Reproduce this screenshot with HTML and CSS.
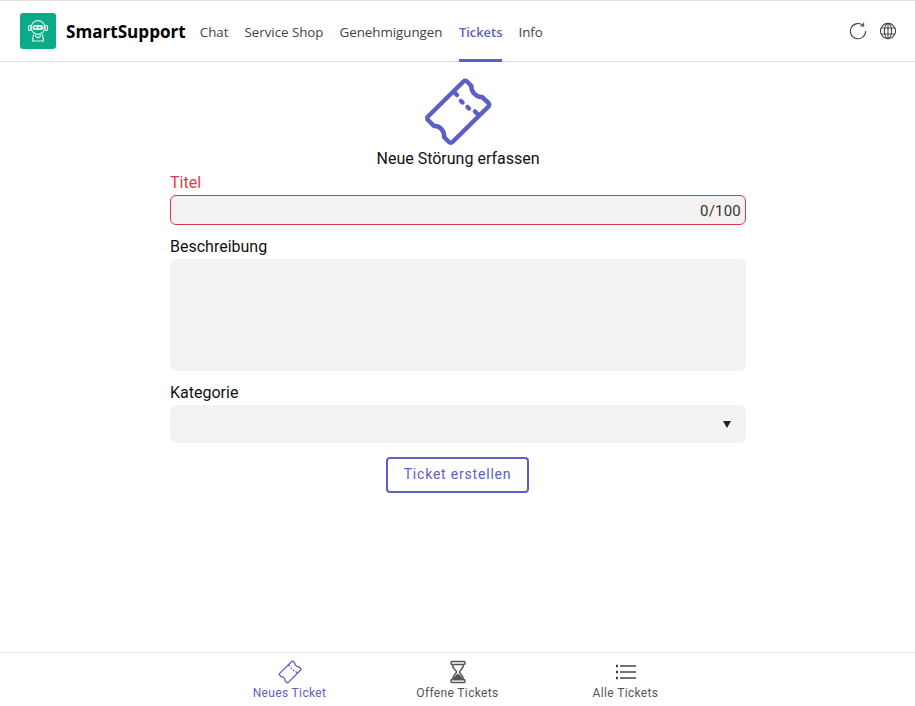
FILE: index.html
```html
<!DOCTYPE html>
<html lang="de">

<head>
    <meta charset="UTF-8">
    <meta name="viewport" content="width=device-width, initial-scale=1.0">
    <title>SmartSupport</title>
    <link rel="stylesheet" href="styles.css">
</head>

<body>
    <header class="topbar">
        <div class="logo">
            <svg width="22" height="24" viewBox="0 0 22 24" fill="none" stroke="#d9f3ec" stroke-width="1.200">
                <circle cx="11" cy="8.500" r="6.800" />
                <rect x="5.500" y="6" width="11" height="5" rx="2.500" fill="#d9f3ec" stroke="none" />
                <circle cx="8.500" cy="8.500" r="1" fill="#0bab87" stroke="none" />
                <path d="M11.500 8.500h2" stroke="#0bab87" />
                <rect x="1.500" y="6.500" width="2.500" height="5" rx="1" />
                <rect x="18" y="6.500" width="2.500" height="5" rx="1" />
                <path d="M6.500 15.500l-1 6.500h11l-1-6.500" />
                <path d="M8 16.500l3 2.500 3-2.500" />
            </svg>
        </div>
        <span class="brand">SmartSupport</span>
        <nav class="tabs">
            <a class="tab" href="#">Chat</a>
            <a class="tab" href="#">Service Shop</a>
            <a class="tab" href="#">Genehmigungen</a>
            <a class="tab active" href="#">Tickets</a>
            <a class="tab" href="#">Info</a>
        </nav>
        <div class="actions">
            <svg width="18" height="18" viewBox="0 0 18 18" fill="none" stroke="#444" stroke-width="1.100">
                <path d="M14.300 3.700A7.600 7.600 0 1 0 16.600 9" />
                <path d="M14.600 0.800v3.200h-3.200" />
            </svg>
            <svg width="18" height="18" viewBox="0 0 18 18" fill="none" stroke="#444" stroke-width="1.100">
                <circle cx="9" cy="9" r="7.600" />
                <ellipse cx="9" cy="9" rx="3.600" ry="7.600" />
                <path d="M9 1.400v15.200M2.200 6h13.600M2.200 12h13.600" />
            </svg>
        </div>
    </header>

    <main class="content">
        <svg class="hero" width="68" height="68" viewBox="0 0 68 68" fill="none" stroke="#5b5fc7" stroke-width="4.500" stroke-linejoin="round" stroke-linecap="round">
            <path d="M39.500 3.500c1-1 2.500-1 3.500 0l4.500 4.500c-1 5 4.500 11.500 10.500 11l6.500 6c1 1 1 2.500 0 3.500L28.500 64c-1 1-2.500 1-3.500 0l-5-5c1-5-4-12-10-11l-6-6c-1-1-1-2.500 0-3.500z" />
            <path d="M30.500 14.500l2.500 2.500M37 23l1.500 1.500M43.500 29l1.500 1.500M51 33.500l3 3" />
        </svg>
        <h1 class="title">Neue Störung erfassen</h1>

        <form class="ticket-form">
            <label class="field-label error" for="titel">Titel</label>
            <div class="input-wrap">
                <input class="input error" id="titel" type="text">
                <span class="counter">0/100</span>
            </div>

            <label class="field-label" for="beschreibung">Beschreibung</label>
            <textarea class="input area" id="beschreibung"></textarea>

            <label class="field-label" for="kategorie">Kategorie</label>
            <div class="select" id="kategorie"><span class="caret"></span></div>

            <button class="submit" type="button">Ticket erstellen</button>
        </form>
    </main>

    <footer class="bottombar">
        <a class="bottom-item active" href="#">
            <svg width="24" height="24" viewBox="0 0 68 68" fill="none" stroke="#5b5fc7" stroke-width="3.600" stroke-linejoin="round" stroke-linecap="round">
                <path d="M39.500 3.500c1-1 2.500-1 3.500 0l4.500 4.500c-1 5 4.500 11.500 10.500 11l6.500 6c1 1 1 2.500 0 3.500L28.500 64c-1 1-2.500 1-3.500 0l-5-5c1-5-4-12-10-11l-6-6c-1-1-1-2.500 0-3.500z" />
                <path d="M30.500 14.500l2.500 2.500M37 23l1.500 1.500M43.500 29l1.500 1.500M51 33.500l3 3" />
            </svg>
            <span class="bottom-label">Neues Ticket</span>
        </a>
        <a class="bottom-item" href="#">
            <svg width="24" height="24" viewBox="0 0 24 24" fill="none" stroke="#555" stroke-width="1.500">
                <rect x="5" y="1.500" width="14" height="3" rx="1" />
                <rect x="5" y="19.500" width="14" height="3" rx="1" />
                <path d="M6.500 4.500c0 5 4 5.500 4 7.500s-4 2.500-4 7.500M17.500 4.500c0 5-4 5.500-4 7.500s4 2.500 4 7.500" />
                <path d="M7.500 19.500c1-3 3-4 4.500-5 1.500 1 3.500 2 4.500 5z" fill="#555" />
            </svg>
            <span class="bottom-label">Offene Tickets</span>
        </a>
        <a class="bottom-item" href="#">
            <svg width="24" height="24" viewBox="0 0 24 24" fill="none" stroke="#444" stroke-width="1.600">
                <path d="M6 6h16M6 12h16M6 18h16" />
                <path d="M2 6h2M2 12h2M2 18h2" stroke-width="2.400" />
            </svg>
            <span class="bottom-label">Alle Tickets</span>
        </a>
    </footer>
</body>

</html>
```

FILE: styles.css
```css
/* Seite */
html,
body {
    height: 100%;
}

body {
    margin: 0;
    display: flex;
    flex-direction: column;
    font-family: Roboto, sans-serif;
    background-color: #fff;
    color: #111;
    box-sizing: border-box;
    border-top: 1px solid #e0e0e0;
}

/* Kopfzeile */
.topbar {
    display: flex;
    align-items: center;
    height: 60px;
    padding: 0 18px 0 20px;
    border-bottom: 1px solid #e0e0e0;
    font-family: "Open Sans", sans-serif;
}

.logo {
    width: 36px;
    height: 36px;
    display: flex;
    align-items: center;
    justify-content: center;
    background-color: #0bab87;
    border-radius: 3px;
}

.brand {
    margin-left: 10px;
    font-size: 17.100px;
    font-weight: 700;
    color: #000;
}

.tabs {
    display: flex;
    align-self: stretch;
    gap: 16px;
    margin-left: 14px;
}

.tab {
    display: flex;
    align-items: center;
    font-size: 13.300px;
    color: #424242;
    text-decoration: none;
    border-bottom: 3px solid transparent;
    border-top: 3px solid transparent;
    margin-bottom: -1px;
}

.tab.active {
    color: #5b5fc7;
    font-weight: 600;
    font-size: 12.900px;
    margin-left: 0.500px;
    border-bottom-color: #5b5fc7;
}

.actions {
    display: flex;
    gap: 12px;
    margin-left: auto;
}

/* Formular */
.content {
    flex: 1;
    display: flex;
    flex-direction: column;
    align-items: center;
    padding: 16px 0 0 1px;
}

.title {
    margin: 2px 0 0;
    font-size: 16px;
    font-weight: 400;
    line-height: 21px;
    color: #111;
}

.ticket-form {
    width: 576px;
    margin-top: 3px;
    display: flex;
    flex-direction: column;
}

.field-label {
    font-size: 16px;
    line-height: 21px;
    margin-bottom: 2px;
}

.field-label.error {
    color: #dc3a4c;
}

.input-wrap {
    position: relative;
    margin-bottom: 11px;
}

.input {
    display: block;
    width: 100%;
    box-sizing: border-box;
    border: 1px solid transparent;
    border-radius: 6px;
    background-color: #f3f2f1;
    outline: none;
    resize: none;
    font-family: Roboto, sans-serif;
}

.input.error {
    height: 30px;
    border-color: #dc3a4c;
}

.counter {
    position: absolute;
    right: 5px;
    top: 7px;
    font-size: 15px;
    letter-spacing: 0.200px;
    color: #333;
}

.area {
    height: 112px;
    margin-bottom: 11px;
}

.select {
    display: flex;
    align-items: center;
    justify-content: flex-end;
    height: 38px;
    padding-right: 15px;
    border-radius: 6px;
    background-color: #f3f2f1;
}

.caret {
    width: 0;
    height: 0;
    border-left: 4px solid transparent;
    border-right: 4px solid transparent;
    border-top: 7px solid #222;
}

.submit {
    align-self: center;
    width: 143px;
    height: 36px;
    margin: 14px 1px 0 0;
    padding: 0 0 2px;
    border: 2px solid #5b5fc7;
    border-radius: 4px;
    background-color: #fff;
    color: #5b5fc7;
    font-family: Roboto, sans-serif;
    font-size: 14px;
    letter-spacing: 0.800px;
}

/* Fusszeile */
.bottombar {
    display: flex;
    justify-content: center;
    height: 53px;
    border-top: 1px solid #e8e8e8;
}

.bottom-item {
    width: 168px;
    display: flex;
    flex-direction: column;
    align-items: center;
    gap: 2px;
    padding-top: 7px;
    font-size: 12px;
    letter-spacing: 0.350px;
    color: #555;
    text-decoration: none;
}

.bottom-item.active {
    color: #5b5fc7;
}
```
